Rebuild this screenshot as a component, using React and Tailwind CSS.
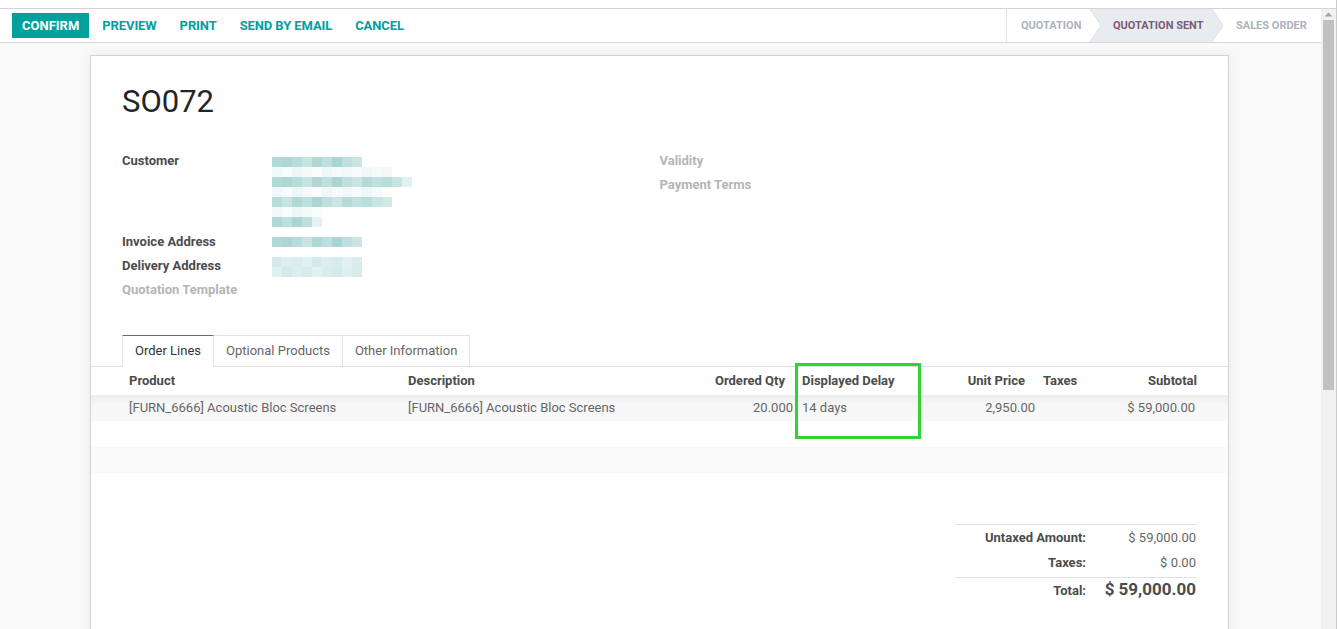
import React from "react";

const strong = ["#b1dad7", "#acd7d4", "#b7dddb", "#c5e4e2", "#b0d9d6", "#bddfdd", "#a9d6d3", "#bfe0de", "#cae6e4", "#b4dbd8", "#c0e1df", "#b8dedb", "#c7e5e3", "#d0e9e7"];
const faint = ["#f1f8f8", "#f7fbfb", "#eef6f6", "#f4f9f9", "#fbfdfd", "#f0f7f7", "#f6fafa", "#f2f8f8", "#f8fbfb", "#eff7f7", "#f5fafa", "#f3f8f8", "#fafcfc", "#f6fafa"];
const light = ["#d5ebe9", "#ddefee", "#d8ecea", "#e0f1f0", "#d3eae8", "#dcefee", "#d6ebea", "#e2f2f1", "#d9edeb"];

const customerRows = [
  { colors: faint.slice(0, 9).map(() => "#fcfdfd"), n: 9 },
  { colors: strong, n: 9 },
  { colors: faint, n: 12 },
  { colors: strong, n: 13, extra: "#e1f1f0" },
  { colors: faint, n: 11 },
  { colors: strong.slice(2).concat(strong), n: 12 },
  { colors: faint, n: 4, extra: "#fafcfc" },
  { colors: strong.slice(4), n: 4, extra: "#e4f2f1" },
];

function PixelRow({ colors, n, extra }) {
  const cells = [];
  for (let i = 0; i < n; i++) cells.push(colors[i % colors.length]);
  if (extra) cells.push(extra);
  return (
    <div className="flex h-[10px] pl-[10px]">
      {cells.map((c, i) => (
        <div key={i} className="w-[10px] h-[10px]" style={{ backgroundColor: c }} />
      ))}
    </div>
  );
}

function Field({ label, light: isLight, children, h = "h-[24px]" }) {
  return (
    <div className={`flex ${h}`}>
      <div className={`w-[140px] leading-[24px] font-bold ${isLight ? "text-[#b5b5b5]" : "text-[#4c4c4c]"}`}>{label}</div>
      <div className="flex-1">{children}</div>
    </div>
  );
}

export default function App() {
  return (
    <div className="w-[1338px] h-[629px] overflow-hidden bg-white flex font-['Roboto','Liberation_Sans',sans-serif] text-[13px] text-[#4c4c4c]">
      <div className="w-[1336px] flex flex-col">
        <div className="h-[8px] bg-white" />
        <div className="flex-1 flex border-t border-[#d3d3d9] min-h-0">
          {/* main */}
          <div className="w-[1321px] flex flex-col bg-[#f9f9f9] min-h-0">
            {/* control panel */}
            <div className="h-[34px] bg-white border-b border-[#d6d6dc] flex">
              <div className="flex items-start pt-[4px] pl-[12px] gap-[3px]">
                <button className="h-[25px] px-[10px] bg-[#00a09d] text-white font-bold text-[13px] leading-[25px] uppercase">Confirm</button>
                {["Preview", "Print", "Send by Email", "Cancel"].map((t) => (
                  <button key={t} className="h-[25px] px-[10px] text-[#00a09d] font-bold text-[13px] tracking-[-0.1px] leading-[25px] uppercase">{t}</button>
                ))}
              </div>
              <div className="ml-auto flex border-l border-[#dee2e6] h-[33px] text-[11px] font-bold uppercase">
                <div className="w-[83px] pl-[14px] leading-[33px] text-[#aeb2bc]">Quotation</div>
                <div className="relative w-[133px] leading-[33px] text-[#7d5a77]">
                  <svg className="absolute inset-0" width="133" height="33" viewBox="0 0 133 33">
                    <polygon points="0,0 122,0 133,16.5 122,33 0,33 11,16.5" fill="#e9ecef" />
                    <polyline points="0,0 11,16.5 0,33" fill="none" stroke="#dde0e4" strokeWidth="1" />
                    <polyline points="122,0 133,16.5 122,33" fill="none" stroke="#dde0e4" strokeWidth="1" />
                  </svg>
                  <span className="relative pl-[23px]">Quotation Sent</span>
                </div>
                <div className="w-[98px] pl-[13px] leading-[33px] text-[#aeb2bc]">Sales Order</div>
              </div>
            </div>

            {/* content */}
            <div className="flex-1 min-h-0 pt-[12px]">
              <div className="relative ml-[90px] w-[1139px] h-[700px] bg-white border border-[#d2d3da] shadow-[0_0_12px_rgba(0,0,0,0.06)] px-[31px] pt-[27px]">
                <h1 className="text-[31px] leading-[38px] text-[#212529] font-normal">SO072</h1>

                <div className="grid grid-cols-2 mt-[28px]">
                  <div className="flex flex-col">
                    <Field label="Customer" h="h-[81px]">
                      <div className="-mt-[2px]">
                        {customerRows.map((r, i) => (
                          <PixelRow key={i} {...r} />
                        ))}
                      </div>
                    </Field>
                    <Field label="Invoice Address">
                      <div className="mt-[7px]">
                        <PixelRow colors={strong} n={9} />
                      </div>
                    </Field>
                    <Field label="Delivery Address">
                      <div className="mt-[3px]">
                        <PixelRow colors={light} n={9} />
                        <PixelRow colors={light.slice(3).concat(light)} n={9} />
                      </div>
                    </Field>
                    <Field label="Quotation Template" light />
                  </div>
                  <div className="flex flex-col">
                    <Field label="Validity" light />
                    <Field label="Payment Terms" light />
                  </div>
                </div>

                {/* tabs */}
                <div className="-mx-[31px] px-[31px] mt-[33px] flex items-end border-b border-[#dee2e6]">
                  <div className="h-[32px] -mb-px px-[12px] leading-[30px] border border-[#dee2e6] border-t-[#875a7b] border-b-white bg-white text-[#333]">Order Lines</div>
                  <div className="h-[32px] -mb-px px-[12px] leading-[30px] border border-[#dee2e6] border-l-0 border-b-transparent text-[#666]">Optional Products</div>
                  <div className="h-[32px] -mb-px px-[12px] leading-[30px] border border-[#dee2e6] border-l-0 border-b-transparent text-[#666]">Other Information</div>
                </div>

                {/* table */}
                <div className="-mx-[31px]">
                  <div className="flex h-[28px] leading-[28px] font-bold text-[#4c4c4c]">
                    <div className="w-[310px] pl-[38px]">Product</div>
                    <div className="w-[299px] pl-[7px]">Description</div>
                    <div className="w-[96px] pr-[11px] text-right">Ordered Qty</div>
                    <div className="w-[139px] pl-[6px]">Displayed Delay</div>
                    <div className="w-[103px] pr-[13px] text-right">Unit Price</div>
                    <div className="w-[62px] pl-[5px]">Taxes</div>
                    <div className="w-[127px] pr-[30px] text-right">Subtotal</div>
                  </div>
                  <div className="flex h-[26px] leading-[26px] text-[#666] bg-linear-to-b from-[#ececec] via-[#f6f6f6] via-30% to-[#f9f9f9]">
                    <div className="w-[310px] pl-[38px]">[FURN_6666] Acoustic Bloc Screens</div>
                    <div className="w-[299px] pl-[7px]">[FURN_6666] Acoustic Bloc Screens</div>
                    <div className="w-[96px] pr-[3px] text-right">20.000</div>
                    <div className="w-[139px] pl-[6px]">14 days</div>
                    <div className="w-[103px] pr-[3px] text-right">2,950.00</div>
                    <div className="w-[62px] pl-[5px]"></div>
                    <div className="w-[127px] pr-[32px] text-right">$ 59,000.00</div>
                  </div>
                  <div className="h-[26px]" />
                  <div className="h-[26px] bg-[#fafafa]" />
                </div>

                {/* totals */}
                <div className="mt-[51px] flex justify-end">
                  <div className="w-[241px] border-t border-[#dee2e6]">
                    <div className="flex h-[25px] leading-[25px]">
                      <div className="w-[130px] text-right font-bold text-[#4c4c4c]">Untaxed Amount:</div>
                      <div className="flex-1 text-right pr-[1px] text-[#666]">$ 59,000.00</div>
                    </div>
                    <div className="flex h-[25px] leading-[25px]">
                      <div className="w-[130px] text-right font-bold text-[#4c4c4c]">Taxes:</div>
                      <div className="flex-1 text-right pr-[1px] text-[#666]">$ 0.00</div>
                    </div>
                    <div className="mt-[2px] border-t border-[#dee2e6] flex h-[25px] items-center">
                      <div className="w-[130px] text-right font-bold text-[#4c4c4c] pt-[2px]">Total:</div>
                      <div className="flex-1 text-right pr-[1px] text-[17px] font-bold text-[#4c4c4c]">$ 59,000.00</div>
                    </div>
                  </div>
                </div>

                {/* highlight box */}
                <div className="absolute left-[704px] top-[307px] w-[126px] h-[76px] border-[3px] border-[#33d233]" />
              </div>
            </div>
          </div>

          {/* scrollbar */}
          <div className="w-[15px] bg-[#f1f1f1] flex flex-col items-center">
            <svg width="15" height="11" viewBox="0 0 15 11" className="shrink-0">
              <polygon points="3.5,7.5 7.5,3.5 11.5,7.5" fill="#a3a3a3" />
            </svg>
            <div className="w-[11px] h-[370px] bg-[#c1c1c1]" />
          </div>
        </div>
      </div>
      <div className="w-px bg-[#cdcdd5]" />
      <div className="w-px bg-white" />
    </div>
  );
}
